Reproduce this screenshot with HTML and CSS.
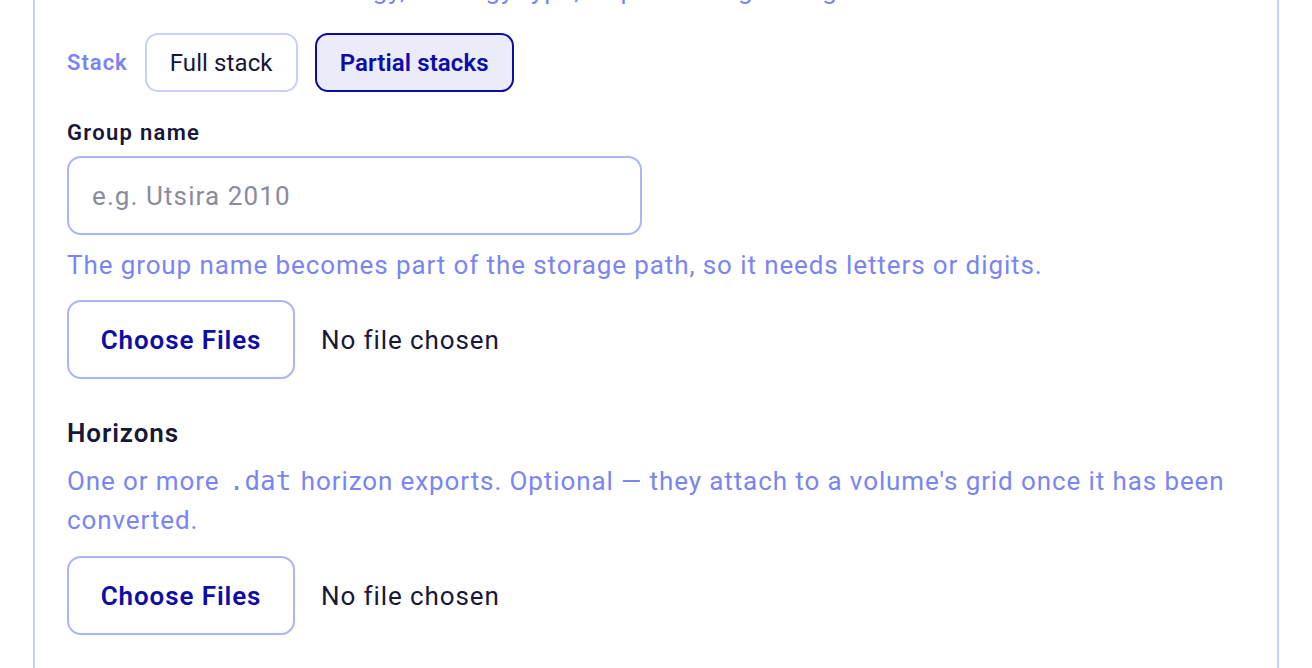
FILE: index.html
```html
<!DOCTYPE html>
<html lang="en">
<head>
<meta charset="utf-8">
<title>Upload</title>
<link rel="stylesheet" href="styles.css">
</head>
<body>
<div class="page">
  <section class="card">
    <p class="intro">Choose a stack technology, strategy type, or partial angle range.</p>
    <div class="stack-row">
      <span class="stack-label">Stack</span>
      <button class="seg">Full stack</button>
      <button class="seg seg-active">Partial stacks</button>
    </div>
    <label class="field-label" for="group">Group name</label>
    <input class="text-input" id="group" type="text" placeholder="e.g. Utsira 2010">
    <p class="help">The group name becomes part of the storage path, so it needs letters or digits.</p>
    <div class="file-row">
      <button class="file-btn">Choose Files</button>
      <span class="file-status">No file chosen</span>
    </div>
    <h3 class="section-title">Horizons</h3>
    <p class="help desc">One or more <code>.dat</code> horizon exports. Optional — they attach to a volume's grid once it has been converted.</p>
    <div class="file-row file-row-last">
      <button class="file-btn">Choose Files</button>
      <span class="file-status">No file chosen</span>
    </div>
  </section>
</div>
</body>
</html>
```

FILE: styles.css
```css
* { box-sizing: border-box; }
html, body {
  margin: 0;
  padding: 0;
  background: #ffffff;
  overflow: hidden;
}
body {
  font-family: Roboto, "Noto Sans", sans-serif;
  color: #17173a;
  letter-spacing: 0.9px;
}
.page {
  margin-top: -40px;
  padding: 0 33px;
}
.card {
  border: 2px solid #c9d1fb;
  border-bottom: none;
  padding: 9px 32px 40px;
  background: #ffffff;
}
.intro {
  margin: 0;
  font-size: 26px;
  line-height: 39px;
  color: #7a85f5;
}
.stack-row {
  display: flex;
  align-items: center;
  gap: 17px;
  margin-top: 23px;
}
.stack-label {
  font-size: 22px;
  font-weight: 600;
  letter-spacing: 1px;
  color: #7a85f5;
}
.seg {
  height: 59px;
  padding: 0 23px;
  border: 2px solid #c9d1fb;
  border-radius: 13px;
  background: #ffffff;
  font-family: inherit;
  font-size: 24px;
  letter-spacing: 0.1px;
  color: #17173a;
}
.seg-active {
  background: #ebebf9;
  border-color: #0c0ca8;
  color: #0c0ca8;
  font-weight: 600;
}
.field-label {
  display: block;
  margin-top: 24px;
  font-size: 22px;
  line-height: 33px;
  font-weight: 600;
  letter-spacing: 1.3px;
  color: #17173a;
}
.text-input {
  display: block;
  margin-top: 7px;
  width: 575px;
  height: 79px;
  padding: 0 23px;
  border: 2px solid #abb5f8;
  border-radius: 14px;
  font-family: inherit;
  font-size: 26px;
  letter-spacing: 1.1px;
  color: #17173a;
  background: #ffffff;
  outline: none;
}
.text-input::placeholder {
  color: #8b8ba0;
}
.help {
  margin: 11px 0 0;
  font-size: 26px;
  line-height: 39px;
  color: #7a85f5;
}
.file-row {
  display: flex;
  align-items: center;
  gap: 26px;
  margin-top: 15px;
}
.file-btn {
  height: 79px;
  width: 228px;
  border: 2px solid #abb5f8;
  border-radius: 14px;
  background: #ffffff;
  font-family: inherit;
  font-size: 26px;
  font-weight: 600;
  letter-spacing: 0.9px;
  color: #0c0ca8;
}
.file-status {
  font-size: 26px;
  color: #17173a;
}
.section-title {
  margin: 35px 0 0;
  font-size: 26px;
  line-height: 39px;
  font-weight: 600;
  color: #17173a;
}
.desc {
  margin-top: 9px;
}
.desc code {
  font-family: "DejaVu Sans Mono", monospace;
  font-size: 26px;
  letter-spacing: 0;
  margin: 0 2px;
}
.file-row-last {
  margin-top: 16px;
}
```
